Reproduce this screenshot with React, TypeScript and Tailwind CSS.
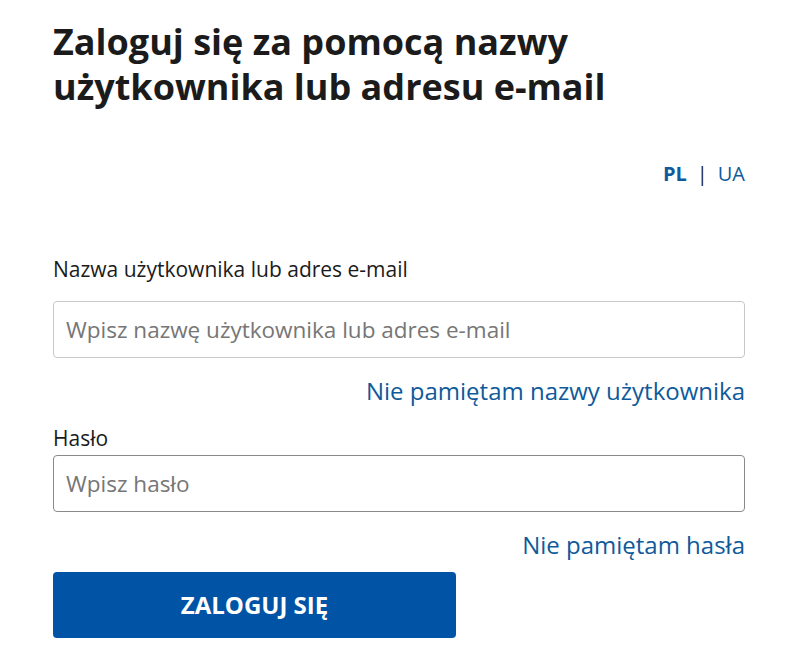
import React from "react";

export default function App() {
  return (
    <div className="min-h-[658px] bg-white" style={{ fontFamily: '"Open Sans", sans-serif' }}>
      <div className="w-[692px] ml-[53px] pt-[19px]">
        <h1 className="text-[36px] leading-[45px] font-bold text-[#1b1b1b]">
          Zaloguj się za pomocą nazwy
          <br />
          użytkownika lub adresu e-mail
        </h1>
        <div className="flex justify-end items-center mt-[51px] h-[28px] text-[20px] leading-[28px]">
          <span className="font-bold text-[#0f5a9a]">PL</span>
          <span className="mx-[10px] text-[#1b1b1b]">|</span>
          <span className="text-[#0f5a9a]">UA</span>
        </div>
        <label className="block mt-[67px] text-[21px] leading-[28px] text-[#1b1b1b]">
          Nazwa użytkownika lub adres e-mail
        </label>
        <input
          className="mt-[18px] block w-full h-[57px] rounded-[4px] border border-[#c8c8c8] px-[12px] text-[22.5px] placeholder:text-[#767676] outline-none"
          placeholder="Wpisz nazwę użytkownika lub adres e-mail"
        />
        <div className="flex justify-end mt-[17px]">
          <a className="text-[24px] leading-[32px] text-[#0f5a9a]">Nie pamiętam nazwy użytkownika</a>
        </div>
        <label className="block mt-[17px] text-[21px] leading-[28px] text-[#1b1b1b]">Hasło</label>
        <input
          type="password"
          className="mt-[3px] block w-full h-[57px] rounded-[4px] border border-[#8a8a8a] px-[12px] text-[22.5px] placeholder:text-[#767676] outline-none"
          placeholder="Wpisz hasło"
        />
        <div className="flex justify-end mt-[17px]">
          <a className="text-[24px] leading-[32px] text-[#0f5a9a]">Nie pamiętam hasła</a>
        </div>
        <button className="mt-[11px] block w-[403px] h-[66px] rounded-[4px] bg-[#0053a5] text-white text-[24px] font-bold uppercase">
          Zaloguj się
        </button>
      </div>
    </div>
  );
}
